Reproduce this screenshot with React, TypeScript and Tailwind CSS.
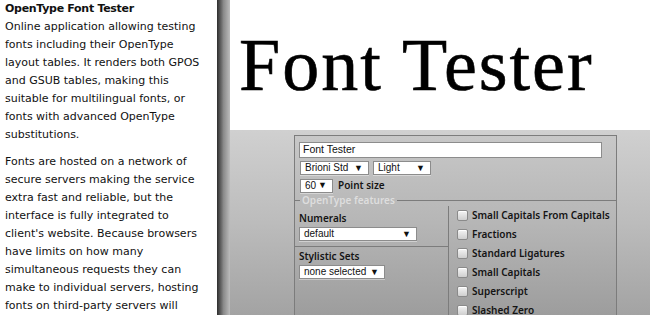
const sans = { fontFamily: '"DejaVu Sans", sans-serif' };
const ctl = { fontFamily: '"Liberation Sans", Arial, sans-serif' };
const lbl = { fontFamily: '"Noto Sans", sans-serif' };

function Select({ label, width }: { label: string; width: string }) {
  return (
    <div
      className={`${width} h-[14px] bg-white border border-[#8c8c8c] shadow-[0_1px_0_rgba(255,255,255,0.4)] flex items-center justify-between pl-[4px] pr-[5px] text-[10px] leading-none text-[#111] whitespace-nowrap`}
      style={ctl}
    >
      <span>{label}</span>
      <span className="text-[9px]">▼</span>
    </div>
  );
}

function Check({ label }: { label: string }) {
  return (
    <div className="flex items-center h-[19px] gap-[4px]">
      <div className="w-[11px] h-[11px] rounded-[2px] border border-[#8a8a8a] bg-gradient-to-b from-[#f4f4f4] to-[#cfcfcf] shadow-[inset_0_1px_0_#fff]" />
      <span className="text-[10px] font-semibold text-[#141414]" style={lbl}>
        {label}
      </span>
    </div>
  );
}

export default function App() {
  return (
    <div className="w-[650px] h-[315px] flex overflow-hidden bg-white" style={sans}>
      <div className="w-[217px] shrink-0 bg-white pl-[5px] text-[11px] leading-[18px] text-[#111] whitespace-nowrap">
        <p className="font-bold tracking-[-0.3px]">OpenType Font Tester</p>
        <p>
          Online application allowing testing
          <br />
          fonts including their OpenType
          <br />
          layout tables. It renders both GPOS
          <br />
          and GSUB tables, making this
          <br />
          suitable for multilingual fonts, or
          <br />
          fonts with advanced OpenType
          <br />
          substitutions.
        </p>
        <p className="mt-[9px]">
          Fonts are hosted on a network of
          <br />
          secure servers making the service
          <br />
          extra fast and reliable, but the
          <br />
          interface is fully integrated to
          <br />
          client's website. Because browsers
          <br />
          have limits on how many
          <br />
          simultaneous requests they can
          <br />
          make to individual servers, hosting
          <br />
          fonts on third-party servers will
        </p>
      </div>

      <div className="w-[13px] shrink-0 bg-gradient-to-r from-[#2e2e2e] via-[#8a8a8a] to-[#bdbdbd]" />

      <div className="flex-1 flex flex-col">
        <div className="h-[130px] shrink-0 bg-white pl-[9px] pt-[28px]">
          <div
            className="text-[74px] leading-none tracking-[2px] text-black [-webkit-text-stroke:0.6px_black]"
            style={{ fontFamily: '"Liberation Serif", serif' }}
          >
            Font Tester
          </div>
        </div>

        <div className="flex-1 min-h-0 bg-gradient-to-b from-[#d0d0d0] via-[#bcbcbc] to-[#a3a3a3] pl-[64px] pt-[5px]">
          <div className="w-[323px] h-full border-l border-t border-r border-[#7c7c7c] bg-black/[0.03] flex flex-col">
            <div className="pl-[4px] pt-[6px] flex flex-col gap-[3px]">
              <div
                className="w-[303px] h-[16px] bg-white border border-[#8c8c8c] flex items-center pl-[3px] text-[10.5px] text-[#111]"
                style={ctl}
              >
                Font Tester
              </div>
              <div className="flex gap-[4px] pl-[1px]">
                <Select label="Brioni Std" width="w-[69px]" />
                <Select label="Light" width="w-[58px]" />
              </div>
              <div className="flex items-center gap-[5px] pl-[1px]">
                <Select label="60" width="w-[33px]" />
                <span className="text-[10px] font-semibold text-[#141414]" style={lbl}>
                  Point size
                </span>
              </div>
            </div>

            <div className="flex items-center h-[12px] mt-[1px]">
              <div className="w-[5px] h-px bg-[#7c7c7c]" />
              <span className="px-[2px] text-[10px] font-semibold text-[#dedede]" style={lbl}>
                OpenType features
              </span>
              <div className="flex-1 h-px bg-[#7c7c7c]" />
            </div>

            <div className="flex flex-1">
              <div className="w-[154px] border-r border-[#7c7c7c] flex flex-col">
                <div className="pl-[4px] pt-[5px] pb-[5px] border-b border-[#7c7c7c]">
                  <div className="text-[10px] leading-[14px] font-semibold text-[#141414] mb-[2px]" style={lbl}>
                    Numerals
                  </div>
                  <Select label="default" width="w-[118px]" />
                </div>
                <div className="pl-[4px] pt-[2px]">
                  <div className="text-[10px] leading-[14px] font-semibold text-[#141414] mb-[2px]" style={lbl}>
                    Stylistic Sets
                  </div>
                  <Select label="none selected" width="w-[86px]" />
                </div>
              </div>
              <div className="flex-1 pl-[8px]">
                <Check label="Small Capitals From Capitals" />
                <Check label="Fractions" />
                <Check label="Standard Ligatures" />
                <Check label="Small Capitals" />
                <Check label="Superscript" />
                <Check label="Slashed Zero" />
              </div>
            </div>
          </div>
        </div>
      </div>
    </div>
  );
}
